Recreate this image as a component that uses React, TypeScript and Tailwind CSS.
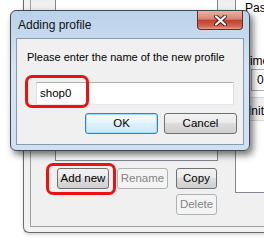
import React from "react";

const btn =
  "h-[21px] rounded-[3px] border text-[11.5px] leading-none flex items-center justify-center";
const normalBtn =
  btn +
  " border-[#707070] text-black bg-[linear-gradient(#f2f2f2,#ebebeb_45%,#dddddd_50%,#cfcfcf)]";
const disabledBtn = btn + " border-[#adb2b5] bg-[#f4f4f4] text-[#838383]";

function CloseButton() {
  return (
    <div className="w-[46px] h-[19px] rounded-b-[4px] border border-t-0 border-[#6b2a22] bg-[linear-gradient(#eab2a5,#d98672_45%,#c3412b_52%,#cd6652_85%,#e4a292)] flex items-center justify-center">
      <svg width="13" height="11" viewBox="0 0 13 11">
        <path d="M2 1.5 L11 9.5 M11 1.5 L2 9.5" stroke="#4a1c17" strokeWidth="4" strokeLinecap="round" />
        <path d="M2 1.5 L11 9.5 M11 1.5 L2 9.5" stroke="#ffffff" strokeWidth="2.2" strokeLinecap="round" />
      </svg>
    </div>
  );
}

function Dialog() {
  return (
    <div className="absolute left-[10px] top-[10px] w-[240px] h-[141px] rounded-[6px] border border-[#3d4a58] bg-[linear-gradient(180deg,#b9d1ea,#d6e5f4_40%,#cfe0f1)] shadow-[3px_4px_7px_rgba(0,0,0,0.55)] flex flex-col">
      <div className="flex items-start justify-between h-[27px]">
        <span className="pl-[7px] pt-[7px] text-[12px] leading-[14px] text-[#111]">Adding profile</span>
        <div className="mr-[6px]">
          <CloseButton />
        </div>
      </div>
      <div className="relative mx-[5px] w-[228px] h-[107px] border border-[#8a9bad] bg-[#f0f0f0] flex flex-col">
        <p className="pl-[10px] pt-[11px] text-[11px] leading-[14px] text-black">
          Please enter the name of the new profile
        </p>
        <div className="ml-[19px] mt-[18px] w-[198px] h-[23px] border border-[#abadb3] border-l-[#dbdfe6] border-r-[#dbdfe6] border-b-[#e3e9ef] bg-white flex items-center pl-[3px] text-[11.5px] text-black">
          shop0
        </div>
        <div className="mt-[8px] flex justify-end gap-[6px] pr-[6px]">
          <div className={btn + " w-[73px] border-[#3c7fb1] text-black bg-[linear-gradient(#f4fafd,#e9f5fc_45%,#dcf0fb_50%,#cfe9f8)] shadow-[inset_0_0_0_1px_#9fe3f8]"}>
            OK
          </div>
          <div className={normalBtn + " w-[73px]"}>Cancel</div>
        </div>
        <div className="absolute left-[8px] top-[36px] w-[64px] h-[33px] rounded-[7px] border-[3px] border-[#ee1111]" />
      </div>
    </div>
  );
}

export default function App() {
  return (
    <div
      className="relative w-[264px] h-[244px] bg-white overflow-hidden"
      style={{ fontFamily: '"Liberation Sans", Arial, sans-serif' }}
    >
      {/* window behind the dialog */}
      <div className="ml-[23px] w-[260px] h-[233px] border-l border-b border-[#6a6a6a] rounded-bl-[6px] bg-[#f2f2f2] shadow-[0_2px_3px_rgba(0,0,0,0.15)] pl-[6px] pb-[5px]">
        <div className="h-full border-l border-b border-[#a0a0a0] bg-[#f0f0f0] flex">
          <div className="w-[204px] shrink-0 flex flex-col">
            <div className="ml-[24px] w-[163px] h-[161px] border-l border-r border-b border-[#828790] bg-white" />
            <div className="ml-[26px] mt-[7px] flex gap-[8px]">
              <div className="relative">
                <div className={normalBtn + " w-[52px]"}>Add new</div>
                <div className="absolute -left-[11px] -top-[5px] w-[70px] h-[32px] rounded-[7px] border-[3px] border-[#ee1111]" />
              </div>
              <div className={disabledBtn + " w-[51px]"}>Rename</div>
              <div className="flex flex-col gap-[5px]">
                <div className={normalBtn + " w-[41px]"}>Copy</div>
                <div className={disabledBtn + " w-[41px]"}>Delete</div>
              </div>
            </div>
          </div>
          <div className="flex-1 h-[193px] border-l border-b border-[#828790] bg-white text-[12px] leading-[14px] text-black flex flex-col">
            <span className="pl-[9px] pt-[1px]">Pass</span>
            <span className="pl-[7px] mt-[39px]">Time</span>
            <div className="ml-[15px] mt-[1px] w-[40px] h-[22px] border border-[#abadb3] flex items-center pl-[5px]">0</div>
            <div className="mt-[6px] border-t border-[#d5d5d5] bg-[#f0f0f0] h-[24px] flex items-end pb-[2px] pl-[12px] border-b">
              Initial
            </div>
          </div>
        </div>
      </div>
      <Dialog />
    </div>
  );
}
